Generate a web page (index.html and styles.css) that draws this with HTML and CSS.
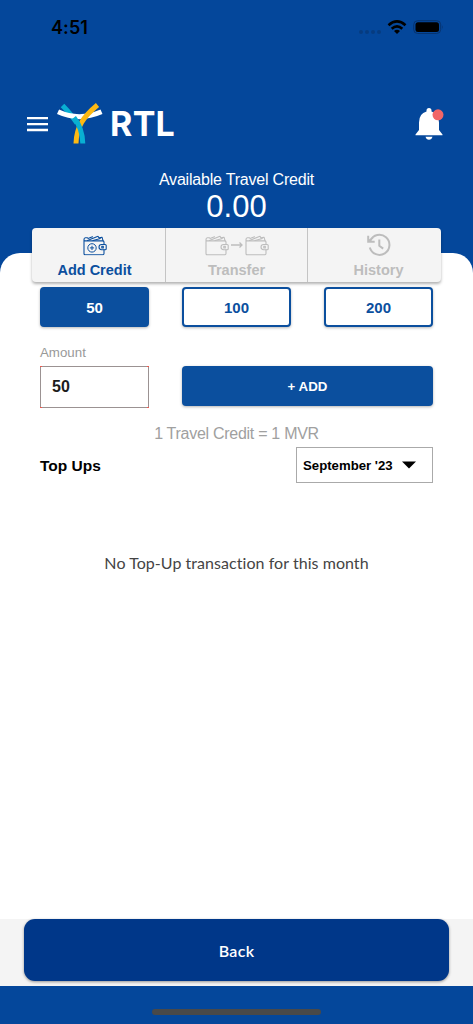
FILE: index.html
```html
<!DOCTYPE html>
<html lang="en">
<head>
<meta charset="utf-8">
<meta name="viewport" content="width=device-width, initial-scale=1">
<title>RTL Travel Credit</title>
<link rel="stylesheet" href="styles.css">
</head>
<body>
<svg class="defs" width="0" height="0" aria-hidden="true">
  <symbol id="wallet" viewBox="0 0 24 20">
    <g fill="none" stroke="currentColor" stroke-width="1.1" stroke-linejoin="round" stroke-linecap="round">
      <path d="M21 9V6.500Q21 5.400 19.800 5.400H2.200Q1 5.400 1 4M21 14.200v3.900Q21 19.300 19.800 19.300H2.200Q1 19.300 1 18.100V4Q1 2.500 2.400 2.300L4.500 2.200"/>
      <path d="M4.500 5L15 .8l1.300 2.200M5 3l4.500-1.800M16 2.300l3-.6 1 3.500M10 5l7.500-2"/>
      <path d="M18.600 9h3.600q1 0 1 1v3.200q0 1-1 1h-3.600a2.600 2.600 0 0 1 0-5.200zM18.800 10.700v1.800h1.500v-1.800z"/>
    </g>
  </symbol>
</svg>
<div class="screen">
  <header class="header">
    <div class="status">
      <span class="time">4:51</span>
      <svg class="status-icons" width="86" height="18" viewBox="0 0 86 18">
        <g fill="#063b80"><circle cx="3" cy="14" r="2"/><circle cx="9" cy="14" r="2"/><circle cx="15" cy="14" r="2"/><circle cx="21" cy="14" r="2"/></g>
        <g fill="none" stroke="#000" stroke-width="2.600"><path d="M30.500 7.200Q39 -.400 47.500 7.200"/><path d="M33.700 10.700Q39 5.900 44.300 10.700"/></g>
        <path d="M36 13Q39 10.600 42 13L39 16z"/>
        <rect x="55.700" y="2.700" width="27" height="12.800" rx="4" fill="none" stroke="#06336f"/>
        <rect x="57.500" y="4.300" width="23.500" height="9.600" rx="2.500"/>
        <path d="M84.200 7.200q1.500 2 0 4z" fill="#06336f"/>
      </svg>
    </div>
    <div class="brandbar">
      <svg class="menu" width="21" height="15" viewBox="0 0 21 15"><path d="M0 1.200h21M0 7.200h21M0 13h21" stroke="#fff" stroke-width="2.300"/></svg>
      <svg class="mark" width="46" height="42" viewBox="0 0 46 42" fill="none" stroke-width="5">
        <path d="M5.500 2.500C12 9 15 13 20 20" stroke="#09afd2"/>
        <path d="M1 8.800Q22 18.500 44.500 8.800" stroke="#fff"/>
        <path d="M40.500 2C26 14 19.500 24 19 40.500" stroke="#fdb913"/>
        <path d="M17 14.500C23 22 25.500 30 25.800 40.500" stroke="#09afd2"/>
      </svg>
      <span class="brand">RTL</span>
      <svg class="bell" width="30" height="34" viewBox="0 0 30 34">
        <path fill="#fff" d="M11.500 3.500a2.500 2.500 0 0 1 5 0v1Q24 6.500 24 15.500v7.500l3.500 4.500v.800H.500v-.800L4 23v-7.500Q4 6.500 11.500 4.500zM10.500 29.800h7q-.800 3-3.500 3t-3.500-3z"/>
        <circle cx="23" cy="7.800" r="5.500" fill="#f16667"/>
      </svg>
    </div>
    <div class="credit-label"><span>Available Travel Credit</span></div>
    <div class="credit-value">0.00</div>
  </header>
  <main class="sheet">
    <nav class="tabs">
      <div class="tab active">
        <div class="tab-icon"><svg width="24" height="21" viewBox="0 0 24 20"><use href="#wallet"/><g fill="none" stroke="currentColor"><circle cx="9" cy="12.400" r="4.200"/><path d="M9 10.300v4.200M6.900 12.400h4.200"/></g></svg></div>
        <span>Add Credit</span>
      </div>
      <div class="tab">
        <div class="tab-icon"><svg width="24" height="21"><use href="#wallet"/></svg><svg width="16" height="10" viewBox="0 0 16 10"><path d="M2 5h11M10.500 2.500L13 5l-2.500 2.500" fill="none" stroke="currentColor" stroke-width="1.300"/></svg><svg width="24" height="21"><use href="#wallet"/></svg></div>
        <span>Transfer</span>
      </div>
      <div class="tab">
        <div class="tab-icon"><svg width="24" height="24" viewBox="0 0 24 24" fill="none" stroke="currentColor" stroke-width="2"><path d="M2.800 14.500A10 10 0 1 0 3.300 7.800M1.200 2.800v6h6.500M1.500 8.300L6 4.600M12.300 6.500v6.300l3.900 2.800"/></svg></div>
        <span>History</span>
      </div>
    </nav>
    <div class="presets">
      <button class="preset selected">50</button>
      <button class="preset">100</button>
      <button class="preset">200</button>
    </div>
    <div class="amount-label">Amount</div>
    <div class="amount-row">
      <div class="amount">50</div>
      <button class="add">+ ADD</button>
    </div>
    <div class="rate"><span>1 Travel Credit = 1 MVR</span></div>
    <div class="history-row">
      <h2>Top Ups</h2>
      <div class="month"><span>September '23</span><svg width="14" height="8" viewBox="0 0 14 8"><path d="M0 .500h14L7 7.500z"/></svg></div>
    </div>
    <p class="empty">No Top-Up transaction for this month</p>
  </main>
  <footer class="footer">
    <button class="back">Back</button>
  </footer>
  <div class="home"><div class="home-bar"></div></div>
</div>
</body>
</html>
```
FILE: styles.css
```css
* { box-sizing: border-box; }
body { margin: 0; font-family: "Liberation Sans", Arial, sans-serif; background: #04479b; }
button { font: inherit; padding: 0; border: 0; }
.defs { display: block; height: 0; }
.screen { width: 473px; height: 1024px; display: flex; flex-direction: column; background: #04479b; }
.header { height: 253px; flex: none; color: #fff; }
.status { height: 54px; padding: 18px 29px 0 51px; display: flex; justify-content: space-between; align-items: flex-start; color: #000; }
.time { font: 600 18px/20px Inter, sans-serif; letter-spacing: .1px; }
.brandbar { height: 90px; padding: 49px 28px 0 27px; display: flex; align-items: flex-start; }
.menu { margin-top: 14px; }
.mark { margin-left: 9px; }
.brand { font: 700 34px/42px Inter, sans-serif; margin-left: 7px; letter-spacing: .3px; }
.bell { margin: 4px 0 0 auto; }
.credit-label { margin-top: 26px; text-align: center; font-size: 16px; line-height: 20px; letter-spacing: -.2px; }
.credit-value { text-align: center; font-size: 31px; line-height: 34px; }
.sheet { flex: 1; background: #fff; border-radius: 20px 20px 0 0; padding: 0 40px; }
.tabs { height: 54px; margin: -25px -8px 0; display: grid; grid-template-columns: 134px 142px 1fr; background: #f4f4f4; border-radius: 4px; box-shadow: 0 2px 3px rgba(0,0,0,.3); color: #bdbdbd; font-weight: 700; font-size: 14.5px; }
.tab { display: flex; flex-direction: column; align-items: center; padding-top: 4px; line-height: 18px; border-right: 1px solid #c4c4c4; }
.tab:last-child { border-right: 0; padding-left: 8px; }
.tab.active { color: #0b4f9e; padding-right: 8px; }
.tab-icon { height: 29px; display: flex; align-items: center; padding-bottom: 3px; }
.presets { display: grid; grid-template-columns: repeat(3, 109px); justify-content: space-between; margin-top: 5px; }
.preset { height: 40px; border: 2px solid #0b4f9e; border-radius: 4px; background: #fff; color: #0b4f9e; font-weight: 700; font-size: 15px; box-shadow: 0 1px 3px rgba(0,0,0,.28); }
.preset.selected { background: #0b4f9e; color: #fff; }
.amount-label { margin-top: 18px; color: #999; font-size: 13.3px; line-height: 16px; }
.amount-row { display: grid; grid-template-columns: 109px 1fr; column-gap: 33px; margin-top: 5px; }
/* grey outline with red ticks in the four corners */
.amount {
  --tick: linear-gradient(#f05a50, #f05a50);
  height: 42px;
  padding-left: 12px;
  font-weight: 700;
  font-size: 16px;
  line-height: 41px;
  color: #1c1c1c;
  background:
    var(--tick) 0 0 / 2px 1px no-repeat,
    var(--tick) 100% 0 / 2px 1px no-repeat,
    var(--tick) 0 100% / 2px 1px no-repeat,
    var(--tick) 100% 100% / 2px 1px no-repeat,
    linear-gradient(#fff, #fff) 50% 50% / calc(100% - 2px) calc(100% - 2px) no-repeat,
    #9b9292;
}
.add { height: 40px; border-radius: 4px; background: #0b4f9e; color: #fff; font-weight: 700; font-size: 13.3px; box-shadow: 0 1px 3px rgba(0,0,0,.3); }
.rate { text-align: center; margin-top: 16px; font-size: 16px; line-height: 20px; color: #a0a0a0; letter-spacing: -.28px; }
.history-row { display: flex; justify-content: space-between; align-items: center; margin-top: 3px; }
h2 { margin: 2px 0 0; font-size: 15.5px; color: #000; }
.month { width: 137px; height: 36px; border: 1px solid #aaa; display: flex; align-items: center; justify-content: space-between; padding: 0 16px 0 6px; font-weight: 700; font-size: 13.2px; }
.empty { margin: 69px 0 0; text-align: center; font: 400 16px/22px Lato, sans-serif; letter-spacing: .05px; color: #444; white-space: nowrap; }
.footer { height: 67px; flex: none; background: #f4f4f4; padding: 0 24px; }
.back { width: 100%; height: 62px; border-radius: 11px; background: #003789; color: #fff; font: 600 16px/61px Lato, sans-serif; letter-spacing: .3px; box-shadow: 0 1px 3px rgba(0,0,0,.4); }
.home { height: 38px; flex: none; display: flex; justify-content: center; padding-top: 23px; }
.home-bar { width: 169px; height: 6px; border-radius: 3px; background: #494949; }
```
